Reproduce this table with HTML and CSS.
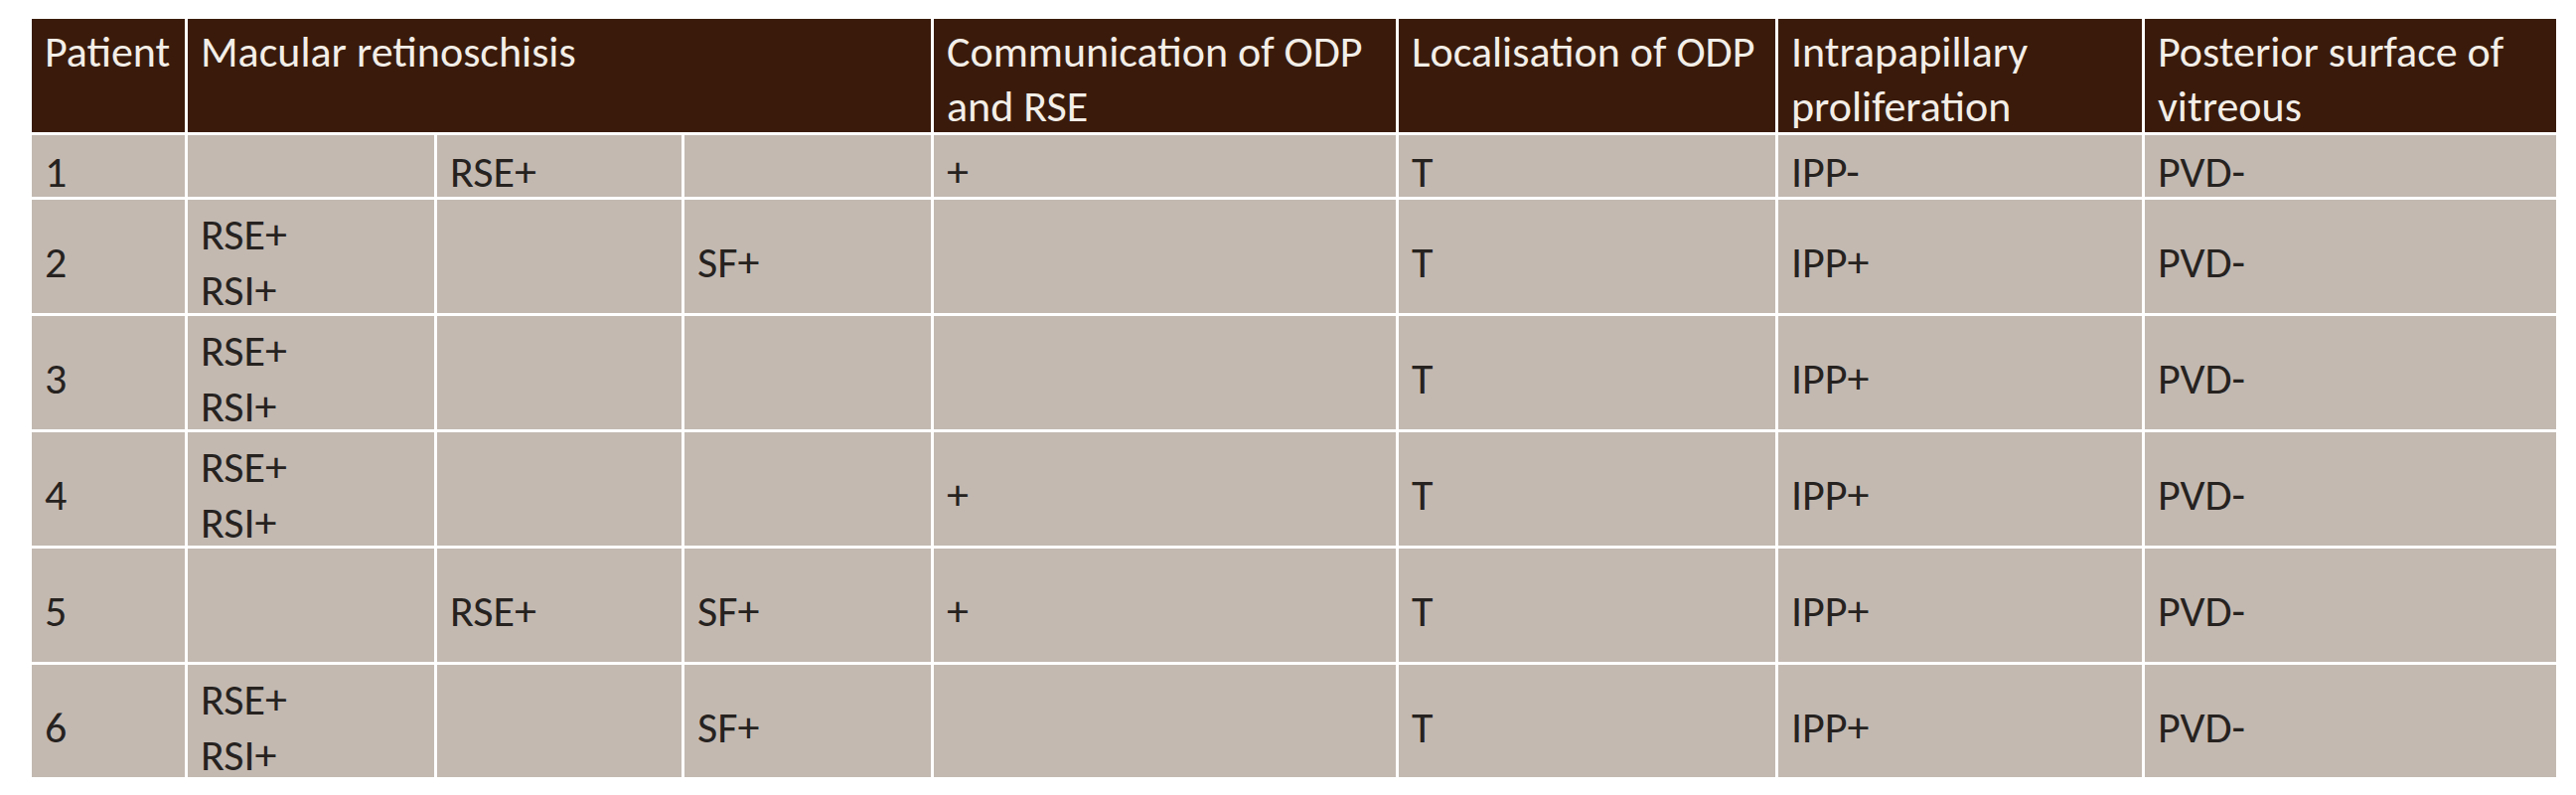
FILE: index.html
```html
<!DOCTYPE html>
<html lang="en">
<head>
<meta charset="utf-8">
<title>Macular retinoschisis table</title>
<link rel="stylesheet" href="styles.css">
</head>
<body>
<div class="table">
  <div class="h">Patient</div>
  <div class="h span3">Macular retinoschisis</div>
  <div class="h">Communication of ODP and RSE</div>
  <div class="h">Localisation of ODP</div>
  <div class="h">Intrapapillary proliferation</div>
  <div class="h">Posterior surface of vitreous</div>

  <div class="c"><span>1</span></div>
  <div class="c"></div>
  <div class="c"><span>RSE+</span></div>
  <div class="c"></div>
  <div class="c"><span>+</span></div>
  <div class="c"><span>T</span></div>
  <div class="c"><span>IPP-</span></div>
  <div class="c"><span>PVD-</span></div>

  <div class="c"><span>2</span></div>
  <div class="c"><span>RSE+</span><span>RSI+</span></div>
  <div class="c"></div>
  <div class="c"><span>SF+</span></div>
  <div class="c"></div>
  <div class="c"><span>T</span></div>
  <div class="c"><span>IPP+</span></div>
  <div class="c"><span>PVD-</span></div>

  <div class="c"><span>3</span></div>
  <div class="c"><span>RSE+</span><span>RSI+</span></div>
  <div class="c"></div>
  <div class="c"></div>
  <div class="c"></div>
  <div class="c"><span>T</span></div>
  <div class="c"><span>IPP+</span></div>
  <div class="c"><span>PVD-</span></div>

  <div class="c"><span>4</span></div>
  <div class="c"><span>RSE+</span><span>RSI+</span></div>
  <div class="c"></div>
  <div class="c"></div>
  <div class="c"><span>+</span></div>
  <div class="c"><span>T</span></div>
  <div class="c"><span>IPP+</span></div>
  <div class="c"><span>PVD-</span></div>

  <div class="c"><span>5</span></div>
  <div class="c"></div>
  <div class="c"><span>RSE+</span></div>
  <div class="c"><span>SF+</span></div>
  <div class="c"><span>+</span></div>
  <div class="c"><span>T</span></div>
  <div class="c"><span>IPP+</span></div>
  <div class="c"><span>PVD-</span></div>

  <div class="c"><span>6</span></div>
  <div class="c"><span>RSE+</span><span>RSI+</span></div>
  <div class="c"></div>
  <div class="c"><span>SF+</span></div>
  <div class="c"></div>
  <div class="c"><span>T</span></div>
  <div class="c"><span>IPP+</span></div>
  <div class="c"><span>PVD-</span></div>
</div>
</body>
</html>
```
FILE: styles.css
```css
html, body {
  margin: 0;
  padding: 0;
  background: #ffffff;
}

body {
  padding: 19px 0 0 32px;
  font-family: Carlito, "Liberation Sans", sans-serif;
  font-size: 44px;
}

.table {
  display: grid;
  grid-template-columns: 154px 248px 246px 248px 465px 379px 366px 414px;
  grid-template-rows: 114px 62px 114px 114px 114px 114px 113px;
  gap: 3px;
  width: max-content;
}

.h {
  background: #3a1b0b;
  color: #f3eee8;
  line-height: 55px;
  padding: 6px 2px 0 13px;
  overflow: visible;
}

.span3 {
  grid-column: span 3;
}

.c {
  background: #c3b9b1;
  color: #262220;
  line-height: 56px;
  padding: 12px 4px 0 13px;
  display: flex;
  flex-direction: column;
  justify-content: center;
  white-space: nowrap;
}

.c span {
  display: block;
}
```
